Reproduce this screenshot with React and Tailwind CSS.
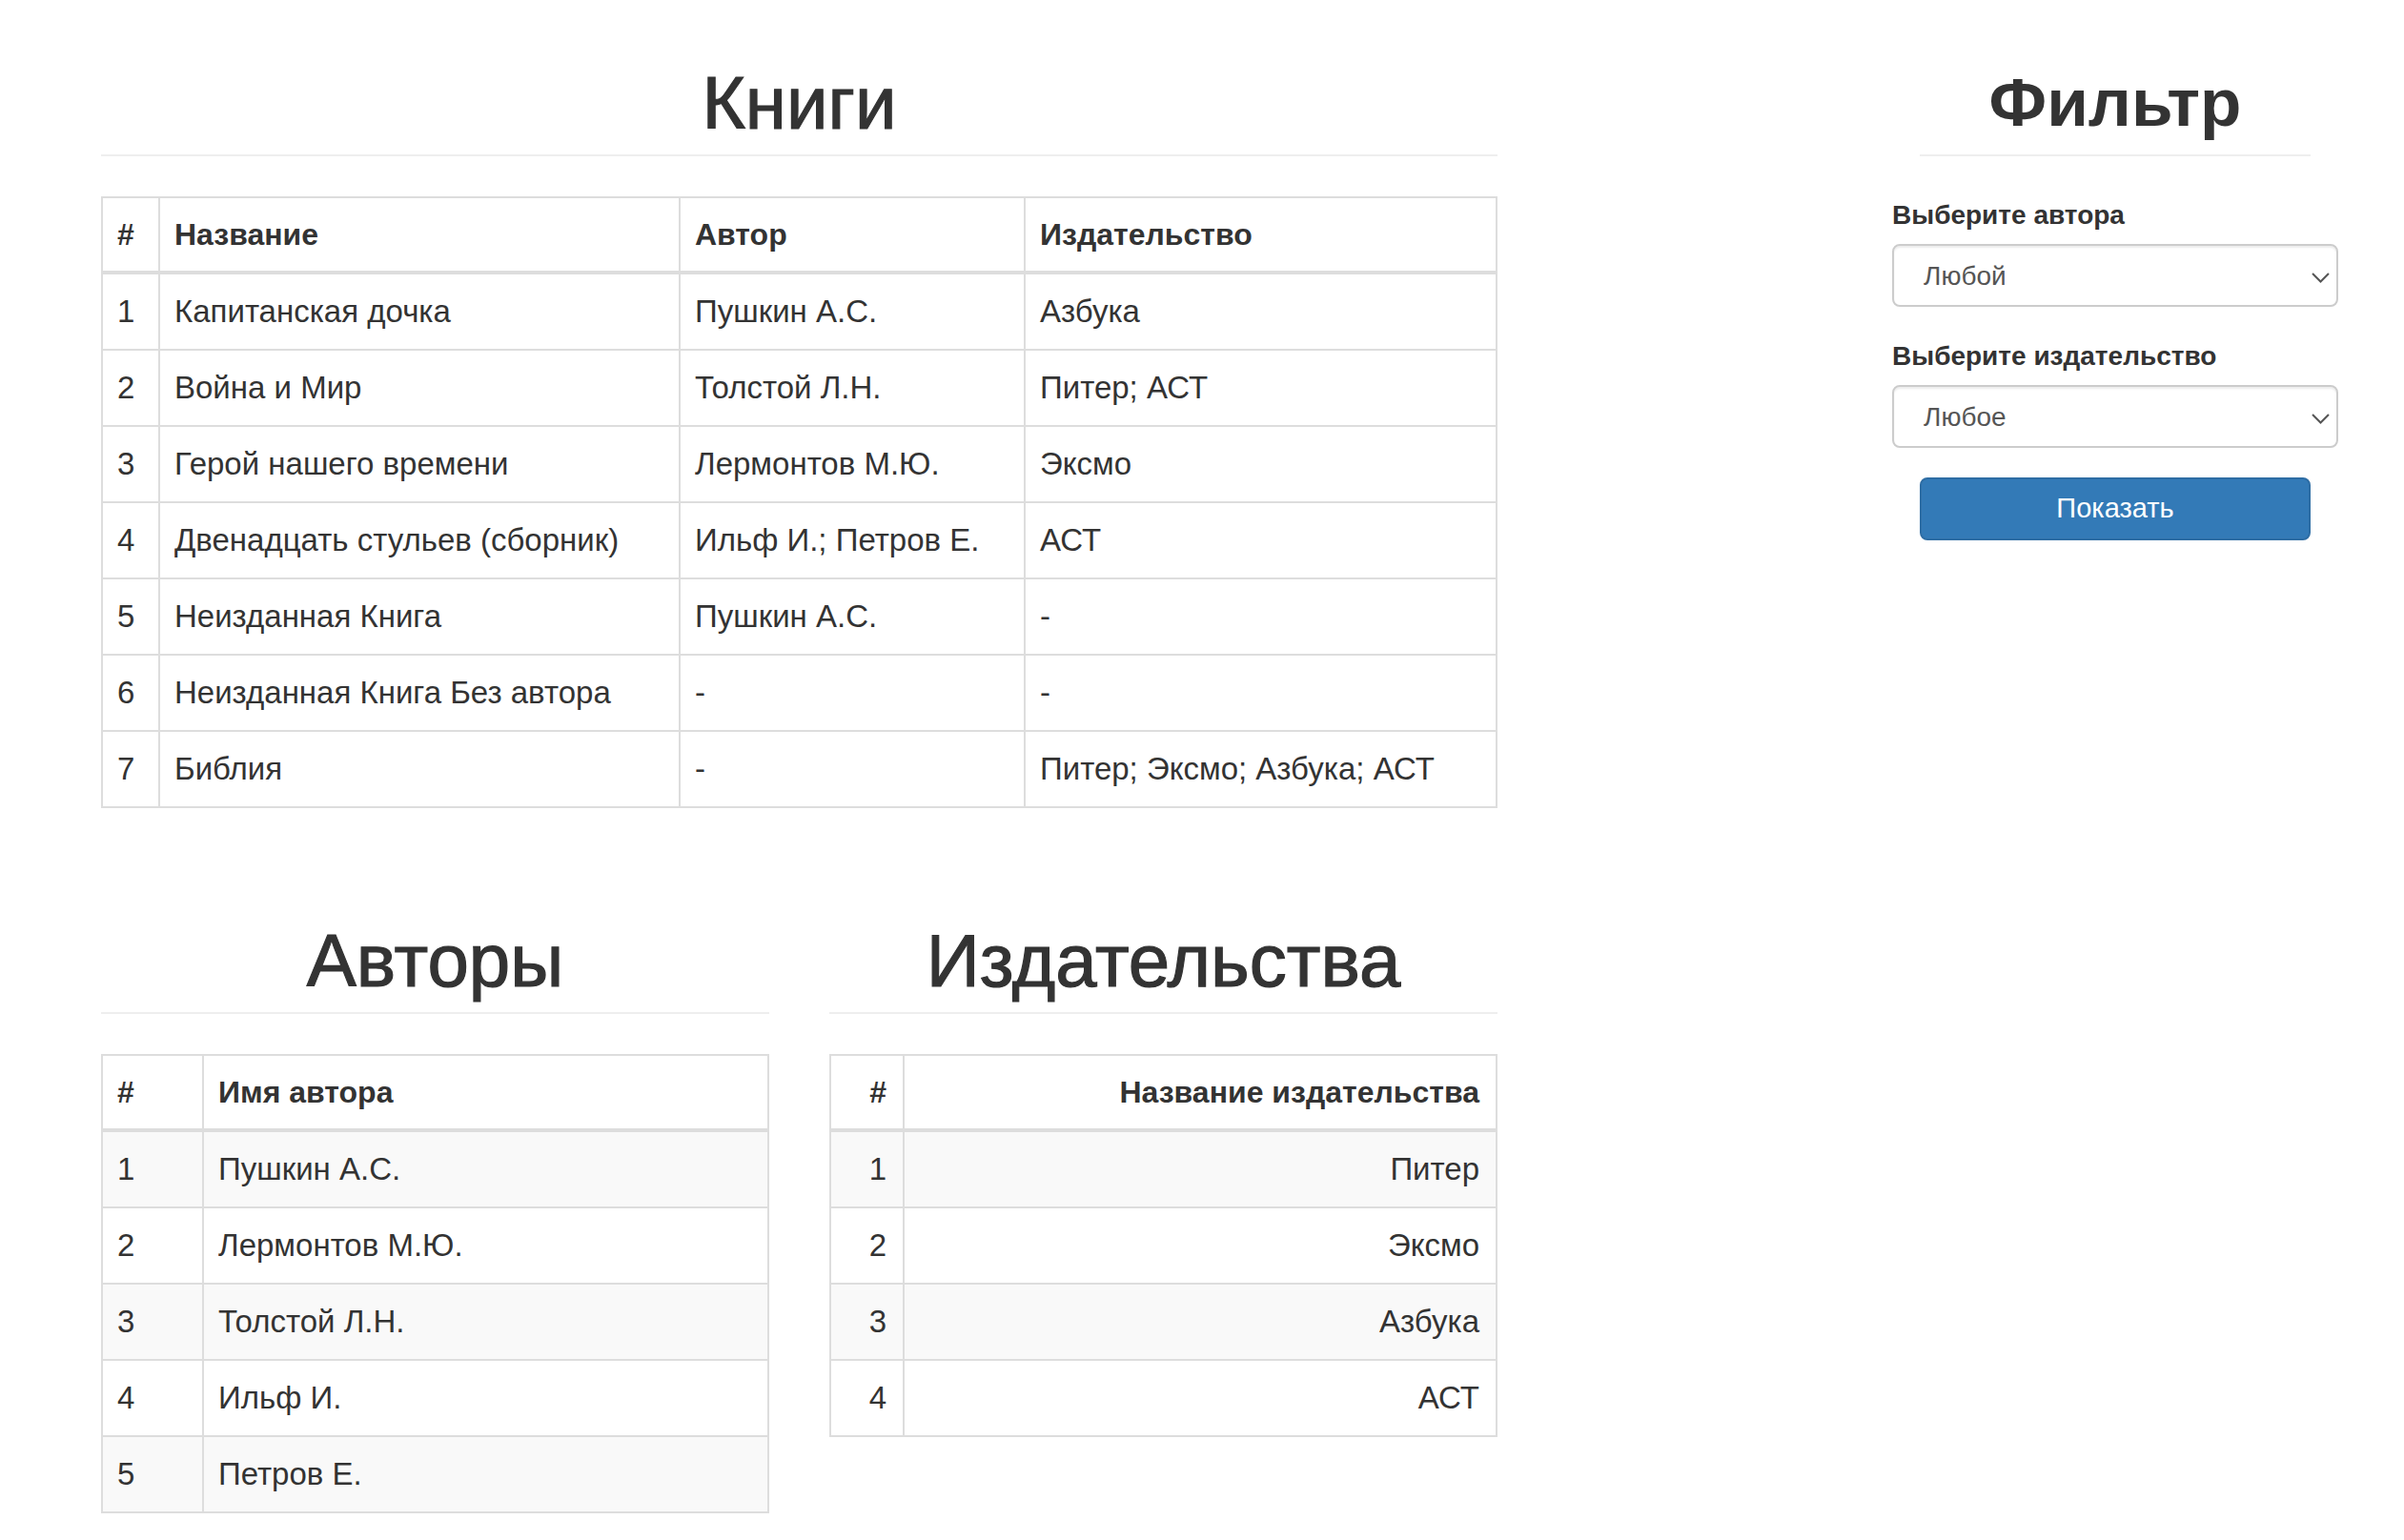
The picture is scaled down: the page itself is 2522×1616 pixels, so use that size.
import React from "react";

const books = [
  ["1", "Капитанская дочка", "Пушкин А.С.", "Азбука"],
  ["2", "Война и Мир", "Толстой Л.Н.", "Питер; АСТ"],
  ["3", "Герой нашего времени", "Лермонтов М.Ю.", "Эксмо"],
  ["4", "Двенадцать стульев (сборник)", "Ильф И.; Петров Е.", "АСТ"],
  ["5", "Неизданная Книга", "Пушкин А.С.", "-"],
  ["6", "Неизданная Книга Без автора", "-", "-"],
  ["7", "Библия", "-", "Питер; Эксмо; Азбука; АСТ"],
];

const authors = ["Пушкин А.С.", "Лермонтов М.Ю.", "Толстой Л.Н.", "Ильф И.", "Петров Е."];
const publishers = ["Питер", "Эксмо", "Азбука", "АСТ"];

function Heading({ children, bold }) {
  return (
    <div className="border-b-2 border-[#eeeeee] pb-[11px]">
      <h1
        className={
          "text-center leading-[86px] text-[#333333] " +
          (bold ? "text-[71px] font-bold" : "text-[78px] font-normal [-webkit-text-stroke:1.2px_#333333]")
        }
      >
        {children}
      </h1>
    </div>
  );
}

const th = "border-2 border-b-4 border-[#dddddd] pl-[15px] pr-[17px] py-[16px] text-[32px] leading-[44px] font-bold";
const td = "border-2 border-[#dddddd] pl-[15px] pr-[17px] py-[17px] leading-[44px]";

function Chevron() {
  return (
    <svg width="19" height="11" viewBox="0 0 19 11" className="absolute right-[7px] top-[28px]">
      <polyline points="1,1 9.5,9.5 18,1" fill="none" stroke="#555" strokeWidth="2" />
    </svg>
  );
}

function Select({ value }) {
  return (
    <div className="relative h-[66px] w-[468px] rounded-[8px] border-2 border-[#cccccc] bg-white shadow-[inset_0_2px_2px_rgba(0,0,0,0.075)]">
      <span className="absolute left-[31px] top-[14px] text-[28px] leading-[36px] text-[#555555]">{value}</span>
      <Chevron />
    </div>
  );
}

export default function App() {
  return (
    <div
      className="min-h-screen bg-white text-[#333333] text-[33px]"
      style={{ fontFamily: '"Liberation Sans", Arial, sans-serif' }}
    >
      <div className="flex pl-[106px] pt-[65px]">
        <div className="w-[1465px]">
          <Heading>Книги</Heading>
          <table className="mt-[42px] w-[1465px] table-fixed border-collapse border-2 border-[#dddddd] text-left">
            <colgroup>
              <col className="w-[60px]" />
              <col className="w-[546px]" />
              <col className="w-[362px]" />
              <col />
            </colgroup>
            <thead>
              <tr>
                <th className={th}>#</th>
                <th className={th}>Название</th>
                <th className={th}>Автор</th>
                <th className={th}>Издательство</th>
              </tr>
            </thead>
            <tbody>
              {books.map((r) => (
                <tr key={r[0]}>
                  {r.map((c, i) => (
                    <td key={i} className={td}>
                      {c}
                    </td>
                  ))}
                </tr>
              ))}
            </tbody>
          </table>

          <div className="mt-[117px] flex gap-[63px]">
            <div className="w-[701px]">
              <Heading>Авторы</Heading>
              <table className="mt-[42px] w-[701px] table-fixed border-collapse border-2 border-[#dddddd] text-left">
                <colgroup>
                  <col className="w-[106px]" />
                  <col />
                </colgroup>
                <thead>
                  <tr>
                    <th className={th}>#</th>
                    <th className={th}>Имя автора</th>
                  </tr>
                </thead>
                <tbody>
                  {authors.map((a, i) => (
                    <tr key={a} className={i % 2 === 0 ? "bg-[#f9f9f9]" : "bg-white"}>
                      <td className={td}>{i + 1}</td>
                      <td className={td}>{a}</td>
                    </tr>
                  ))}
                </tbody>
              </table>
            </div>
            <div className="w-[701px]">
              <Heading>Издательства</Heading>
              <table className="mt-[42px] w-[701px] table-fixed border-collapse border-2 border-[#dddddd] text-right">
                <colgroup>
                  <col className="w-[77px]" />
                  <col />
                </colgroup>
                <thead>
                  <tr>
                    <th className={th + " text-right"}>#</th>
                    <th className={th + " text-right"}>Название издательства</th>
                  </tr>
                </thead>
                <tbody>
                  {publishers.map((p, i) => (
                    <tr key={p} className={i % 2 === 0 ? "bg-[#f9f9f9]" : "bg-white"}>
                      <td className={td}>{i + 1}</td>
                      <td className={td}>{p}</td>
                    </tr>
                  ))}
                </tbody>
              </table>
            </div>
          </div>
        </div>

        <div className="ml-[414px] w-[468px]">
          <div className="mx-[29px]">
            <Heading bold>Фильтр</Heading>
          </div>
          <div className="mt-[46px] text-[28px] font-bold leading-[32px]">Выберите автора</div>
          <div className="mt-[14px]">
            <Select value="Любой" />
          </div>
          <div className="mt-[36px] text-[28px] font-bold leading-[32px]">Выберите издательство</div>
          <div className="mt-[14px]">
            <Select value="Любое" />
          </div>
          <div className="mx-[29px] mt-[31px]">
            <button className="h-[66px] w-full rounded-[8px] border-2 border-[#2e6da4] bg-[#337ab7] text-[29px] text-white">
              Показать
            </button>
          </div>
        </div>
      </div>
    </div>
  );
}
